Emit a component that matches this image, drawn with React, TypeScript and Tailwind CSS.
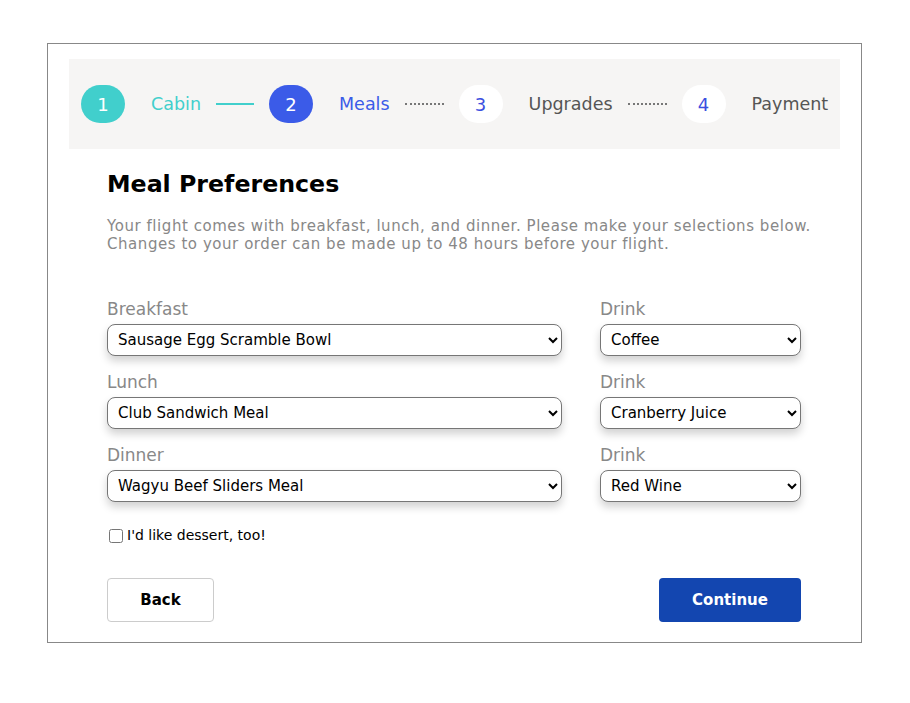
import { useState } from "react"

const meals = [
  { label: "Breakfast", value: "Sausage Egg Scramble Bowl", drink: "Coffee" },
  { label: "Lunch", value: "Club Sandwich Meal", drink: "Cranberry Juice" },
  { label: "Dinner", value: "Wagyu Beef Sliders Meal", drink: "Red Wine" },
]

const selectClass =
  "h-[32px] w-full rounded-lg border border-[#767676] bg-white pl-[6px] pr-1 text-[15px] text-black shadow-[0_5px_9px_rgba(0,0,0,0.18)]"

const Step = ({ n, label, state }: { n: number, label: string, state: "done" | "active" | "todo" }) => {
  const circle =
    state === "done" ? "bg-[#41cfcc] text-white" :
    state === "active" ? "bg-[#3b5be8] text-white" :
    "bg-white text-[#3b4fe0]"
  const text =
    state === "done" ? "text-[#41cfcc]" :
    state === "active" ? "text-[#3b5be8]" :
    "text-[#555]"
  return (
    <div className="flex items-center">
      <div className={`flex h-[38px] w-[44px] items-center justify-center rounded-full text-[18px] ${circle}`}>
        {n}
      </div>
      <span className={`ml-[26px] mt-[1px] text-[17.5px] ${text}`}>{label}</span>
    </div>
  )
}

export default function App() {
  const [dessert, setDessert] = useState(false)

  return (
    <div className="min-h-screen bg-white pt-[43px] pl-[47px]" style={{ fontFamily: "Verdana, 'DejaVu Sans', sans-serif" }}>
      <div className="w-[815px] h-[600px] border border-[#888] pt-[15px] pl-[21px] pr-[21px]">
        <div className="flex h-[90px] items-center bg-[#f6f5f4] pl-[12px]">
          <Step n={1} label="Cabin" state="done" />
          <div className="mx-[15px] h-[2px] w-[38px] bg-[#41cfcc]" />
          <Step n={2} label="Meals" state="active" />
          <div className="mx-[15px] w-[39px] border-t-2 border-dotted border-[#777]" />
          <Step n={3} label="Upgrades" state="todo" />
          <div className="mx-[15px] w-[39px] border-t-2 border-dotted border-[#777]" />
          <Step n={4} label="Payment" state="todo" />
        </div>

        <div className="pl-[38px] pr-[39px] pt-[19px]">
          <h1 className="text-[23.7px] font-bold leading-[32px] text-black">Meal Preferences</h1>
          <p className="mt-[17px] whitespace-nowrap text-[15px] leading-[18px] tracking-[0.55px] text-[#888]">
            Your flight comes with breakfast, lunch, and dinner. Please make your selections below.
            <br />
            Changes to your order can be made up to 48 hours before your flight.
          </p>

          <div className="mt-[44px] flex flex-col gap-[14px]">
            {meals.map(m => (
              <div key={m.label} className="flex justify-between">
                <div className="w-[455px]">
                  <div className="mb-[3px] text-[17px] leading-[24px] text-[#888]">{m.label}</div>
                  <select className={selectClass} defaultValue={m.value}>
                    <option>{m.value}</option>
                  </select>
                </div>
                <div className="w-[201px]">
                  <div className="mb-[3px] text-[17px] leading-[24px] text-[#888]">Drink</div>
                  <select className={selectClass} defaultValue={m.drink}>
                    <option>{m.drink}</option>
                  </select>
                </div>
              </div>
            ))}
          </div>

          <label className="mt-[23px] flex items-center text-[14px] text-black">
            <input
              type="checkbox"
              checked={dessert}
              onChange={e => setDessert(e.target.checked)}
              className="ml-[2px] mr-[4px] h-[14px] w-[14px]"
            />
            I'd like dessert, too!
          </label>

          <div className="mt-[32px] flex justify-between">
            <button className="h-[44px] w-[107px] rounded-[4px] border border-[#ccc] bg-white text-[15px] font-bold text-black">
              Back
            </button>
            <button className="h-[44px] w-[142px] rounded-[4px] bg-[#1346b0] text-[15px] font-bold text-white">
              Continue
            </button>
          </div>
        </div>
      </div>
    </div>
  )
}
